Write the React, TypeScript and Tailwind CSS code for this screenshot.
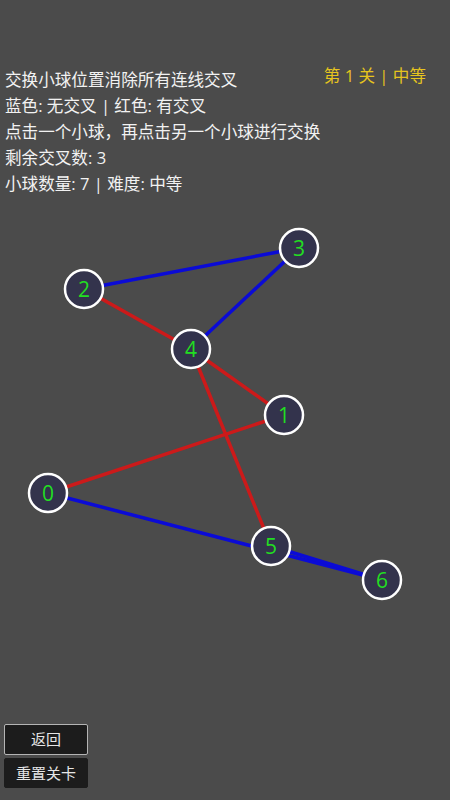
type Ball = { id: number; x: number; y: number }
type Edge = { a: number; b: number; crossed: boolean }

const balls: Ball[] = [
  { id: 0, x: 48, y: 493 },
  { id: 1, x: 284, y: 415 },
  { id: 2, x: 84, y: 289 },
  { id: 3, x: 299, y: 248 },
  { id: 4, x: 191, y: 349 },
  { id: 5, x: 271, y: 546 },
  { id: 6, x: 382, y: 580 }
]

const edges: Edge[] = [
  { a: 2, b: 3, crossed: false },
  { a: 3, b: 4, crossed: false },
  { a: 2, b: 4, crossed: true },
  { a: 4, b: 1, crossed: true },
  { a: 4, b: 5, crossed: true },
  { a: 1, b: 0, crossed: true },
  { a: 0, b: 6, crossed: false },
  { a: 5, b: 6, crossed: false }
]

// the svg starts at page y=210
const TOP = 210

function Board() {
  const pos = (id: number) => balls.find((b) => b.id === id)!
  return (
    <svg width={450} height={420} viewBox={`0 ${TOP} 450 420`} className="block">
      {edges.map((e, i) => {
        const p = pos(e.a)
        const q = pos(e.b)
        return (
          <line
            key={i}
            x1={p.x}
            y1={p.y}
            x2={q.x}
            y2={q.y}
            stroke={e.crossed ? '#cc1a1a' : '#0b0bd6'}
            strokeWidth={3.5}
            strokeLinecap="round"
          />
        )
      })}
      {balls.map((b) => (
        <g key={b.id}>
          <circle cx={b.x} cy={b.y} r={19} fill="#33334c" stroke="#ffffff" strokeWidth={2.5} />
          <text
            x={b.x}
            y={b.y + 7.5}
            textAnchor="middle"
            fontSize={21}
            fill="#22dd22"
            fontFamily="'Open Sans', 'Noto Sans', sans-serif"
          >
            {b.id}
          </text>
        </g>
      ))}
    </svg>
  )
}

export default function App() {
  return (
    <div
      className="w-[450px] h-[800px] bg-[#4b4b4b] flex flex-col overflow-hidden"
      style={{ fontFamily: "'Open Sans', 'Noto Sans CJK SC', sans-serif" }}
    >
      <div className="flex justify-between pt-[67px] pl-[5px] pr-[24px]">
        <div className="text-[16.6px] leading-[26px] text-[#f2f2f2]">
          <div>交换小球位置消除所有连线交叉</div>
          <div>蓝色: 无交叉 | 红色: 有交叉</div>
          <div>点击一个小球，再点击另一个小球进行交换</div>
          <div>剩余交叉数: 3</div>
          <div>小球数量: 7 | 难度: 中等</div>
        </div>
        <div className="-mt-[4px] text-[16.6px] leading-[26px] text-[#e6c41e]">第 1 关 | 中等</div>
      </div>
      <div className="mt-[13px]">
        <Board />
      </div>
      <div className="mt-auto mb-[12px] ml-[4px] flex flex-col gap-[3px]">
        <button className="w-[84px] h-[31px] bg-[#1c1c1c] border border-[#b4b4b4] rounded-[2px] text-[15px] text-[#e6e6e6]">
          返回
        </button>
        <button className="w-[84px] h-[30px] bg-[#1c1c1c] border border-[#1c1c1c] rounded-[2px] text-[15px] text-[#e6e6e6]">
          重置关卡
        </button>
      </div>
    </div>
  )
}
